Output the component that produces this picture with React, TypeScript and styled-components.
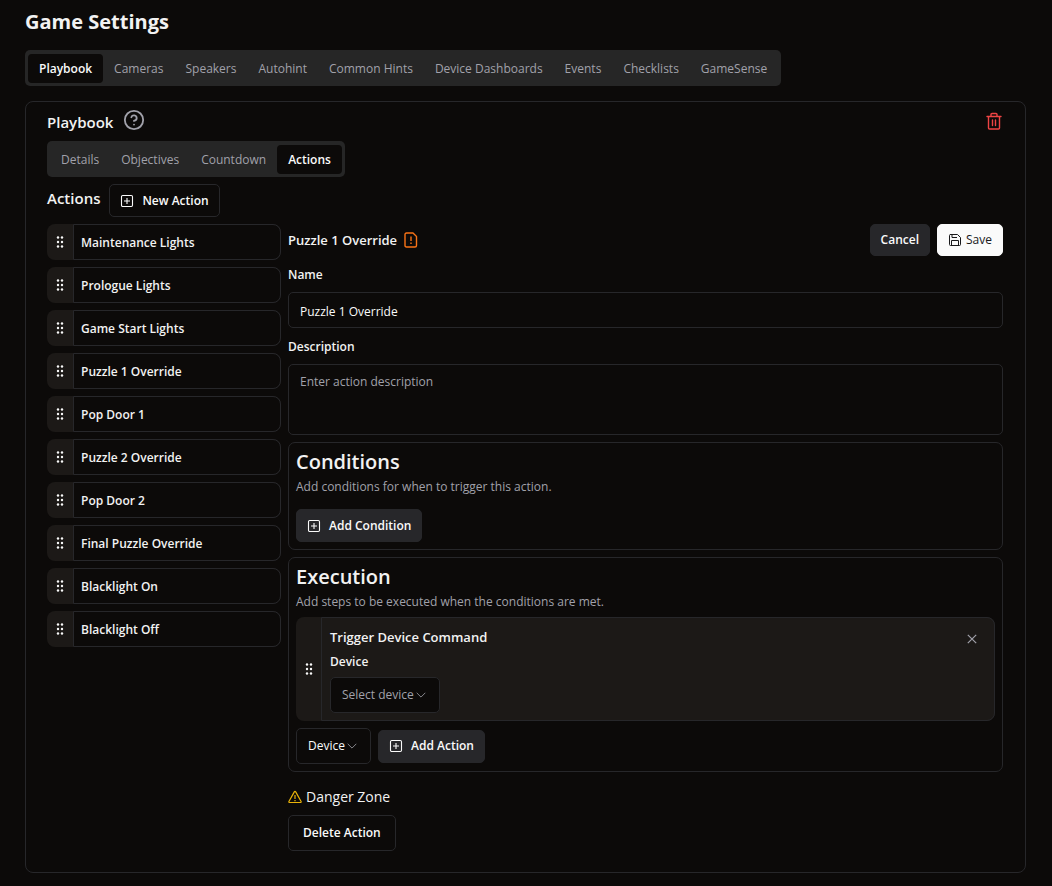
import React from "react";
import styled, { createGlobalStyle, css } from "styled-components";

const Global = createGlobalStyle`
  *, *::before, *::after { box-sizing: border-box; }
  body {
    margin: 0;
    background: #0c0a09;
    color: #f2f2f2;
    font-family: "Open Sans", "Noto Sans", sans-serif;
    font-size: 12px;
    line-height: 18px;
  }
  button, input, textarea, select { font: inherit; color: inherit; margin: 0; }
  h1, h2, h3, h4, p, ul { margin: 0; padding: 0; font-weight: 600; }
`;

const line = "#27272a";
const muted = "#a1a1aa";

const Page = styled.main`
  padding: 7px 26px 13px 25px;
`;

const Title = styled.h1`
  font-size: 20px;
  line-height: 30px;
  font-weight: 700;
`;

const TabList = styled.div<{ $top: number }>`
  display: flex;
  width: fit-content;
  height: 36px;
  margin-top: ${(p) => p.$top}px;
  padding: 4px 3px 3px;
  border-radius: 5px;
  background: #262626;
`;

const Tab = styled.button<{ $active?: boolean }>`
  border: 0;
  border-radius: 4px;
  padding: 0 11px;
  font-weight: ${(p) => (p.$active ? 600 : 500)};
  white-space: nowrap;
  background: ${(p) => (p.$active ? "#0c0a09" : "transparent")};
  color: ${(p) => (p.$active ? "#fafafa" : muted)};
`;

const Panel = styled.section`
  margin-top: 15px;
  padding: 6px 22px 21px 21px;
  border: 1px solid ${line};
  border-radius: 8px;
`;

const PanelHead = styled.header`
  display: flex;
  align-items: flex-start;
  gap: 10px;
  height: 26px;
`;

const Heading = styled.h2`
  font-size: 15px;
  line-height: 28px;
  font-weight: 600;
`;

const IconButton = styled.button`
  display: grid;
  place-items: center;
  min-height: 24px;
  padding: 0;
  border: 0;
  background: transparent;
  color: ${muted};
`;

const DeleteIcon = styled(IconButton)`
  margin-left: auto;
  min-height: 26px;
  color: #ef4444;
`;

const ActionsHead = styled.div`
  display: flex;
  gap: 9px;
  margin-top: 7px;
`;

const Button = styled.button<{ $kind?: "outline" | "solid" | "light"; $size?: "compact" | "tall" }>`
  display: inline-flex;
  align-items: center;
  gap: 8px;
  height: ${(p) => (p.$size === "tall" ? 36 : p.$size === "compact" ? 32 : 33)}px;
  padding: 0 ${(p) => (p.$size === "tall" ? 14 : 10)}px;
  border: 1px solid ${line};
  border-radius: 5px;
  background: #0c0a09;
  color: #fafafa;
  font-weight: 600;
  white-space: nowrap;
  ${(p) => p.$kind === "solid" && css`background: #27272a;`}
  ${(p) =>
    p.$kind === "light" &&
    css`
      background: #fafafa;
      border-color: #fafafa;
      color: #18181b;
      font-weight: 500;
      gap: 4px;
    `}
`;

const Columns = styled.div`
  display: grid;
  grid-template-columns: 234px minmax(0, 1fr);
  gap: 7px;
  margin-top: 7px;
  align-items: start;
`;

const List = styled.ul`
  display: grid;
  gap: 7px;
  list-style: none;
`;

const Item = styled.li`
  display: flex;
  height: 36px;
  border-radius: 8px;
  background: #1c1917;
`;

const Grip = styled.button`
  display: grid;
  place-items: center;
  flex: 0 0 26px;
  padding: 0;
  border: 0;
  background: transparent;
  color: #fafafa;
`;

const ItemName = styled.button`
  flex: 1;
  padding: 2px 7px 0;
  border: 1px solid ${line};
  border-radius: 0 8px 8px 0;
  background: #0c0a09;
  font-weight: 600;
  text-align: left;
`;

const Editor = styled.form`
  display: flex;
  flex-direction: column;
`;

const EditorHead = styled.div`
  display: flex;
  align-items: center;
  gap: 7px;
  height: 32px;
`;

const EditorTitle = styled.h3`
  display: flex;
  align-items: center;
  gap: 7px;
  margin-right: auto;
  font-size: 13px;
`;

const Label = styled.label`
  font-weight: 600;
  line-height: 18px;
`;

const fieldBox = css`
  display: block;
  width: 100%;
  border: 1px solid ${line};
  border-radius: 5px;
  background: #0c0a09;
  color: #fafafa;
  outline: 0;
  &::placeholder { color: ${muted}; opacity: 1; }
`;

const Field = styled.div`
  display: grid;
  gap: 8px;
  margin-top: 10px;
`;

const Input = styled.input`
  ${fieldBox}
  height: 36px;
  padding: 2px 11px 0;
`;

const Textarea = styled.textarea`
  ${fieldBox}
  height: 71px;
  padding: 8px 11px;
  resize: none;
`;

const Card = styled.section`
  margin-top: 7px;
  padding: 7px;
  border: 1px solid ${line};
  border-radius: 7px;
`;

const CardTitle = styled.h3`
  font-size: 20px;
  line-height: 24px;
  font-weight: 600;
`;

const CardText = styled.p<{ $gap: number }>`
  margin: 4px 0 ${(p) => p.$gap}px;
  color: ${muted};
  font-weight: 400;
`;

const Step = styled.div`
  display: flex;
  border-radius: 8px;
  background: #1c1917;
`;

const StepGrip = styled(Grip)`
  flex-basis: 25px;
`;

const StepBody = styled.div`
  flex: 1;
  display: flex;
  justify-content: space-between;
  align-items: flex-start;
  padding: 9px 15px 7px 8px;
  border: 1px solid ${line};
  border-radius: 0 8px 8px 0;
`;

const StepFields = styled.div`
  display: grid;
  gap: 6px;
  justify-items: start;
`;

const StepTitle = styled.h4`
  font-size: 13px;
  line-height: 20px;
`;

const SelectWrap = styled.span<{ $muted?: boolean }>`
  display: inline-grid;
  align-items: center;
  color: ${(p) => (p.$muted ? muted : "#fafafa")};
  & > * { grid-area: 1 / 1; }
  & > svg { justify-self: end; margin-right: 14px; pointer-events: none; color: #85858a; }
`;

const Select = styled.select<{ $width: number }>`
  appearance: none;
  width: ${(p) => p.$width}px;
  height: 36px;
  padding: 0 11px;
  border: 1px solid ${line};
  border-radius: 5px;
  background: #0c0a09;
`;

const AddRow = styled.div`
  display: flex;
  align-items: center;
  gap: 7px;
  margin-top: 7px;
`;

const Danger = styled.h3`
  display: flex;
  align-items: center;
  gap: 4px;
  margin: 16px 0 9px;
  font-size: 14px;
  font-weight: 400;
  & > svg { color: #eab308; }
`;

const Footer = styled.div`
  display: flex;
`;

const PlusSquare = () => (
  <svg width="14" height="14" viewBox="0 0 14 14" fill="none" stroke="currentColor" aria-hidden="true">
    <rect x="1.5" y="1.5" width="11" height="11" rx="1.2" strokeWidth="1.1" />
    <path d="M7 4v6M4 7h6" strokeWidth="1.1" />
  </svg>
);

const Dots = () => (
  <svg width="14" height="14" viewBox="0 0 14 14" fill="currentColor" aria-hidden="true">
    {[2.5, 7, 11.5].map((y) =>
      [5, 9].map((x) => <circle key={`${x}-${y}`} cx={x} cy={y} r="1.2" />)
    )}
  </svg>
);

const Chevron = () => (
  <svg width="10" height="10" viewBox="0 0 10 10" fill="none" stroke="currentColor" aria-hidden="true">
    <path d="M0.7 2.8l4.3 4.3 4.3-4.3" />
  </svg>
);

const Help = () => (
  <svg width="22" height="22" viewBox="0 0 24 24" fill="none" stroke="currentColor" strokeWidth="2" strokeLinecap="round" strokeLinejoin="round" aria-hidden="true">
    <circle cx="12" cy="12" r="10" />
    <path d="M9.09 9a3 3 0 0 1 5.83 1c0 2-3 3-3 3M12 17h.01" />
  </svg>
);

const Trash = () => (
  <svg width="18" height="18" viewBox="0 0 18 18" fill="none" stroke="currentColor" strokeWidth="1.4" strokeLinecap="round" strokeLinejoin="round" aria-hidden="true">
    <path d="M2 4.5h14M3.5 4.5v11.5q0 1 1 1h9q1 0 1-1v-11.5M6 4.5v-2q0-1 1-1h4q1 0 1 1v2M7.5 8v5.5M10.5 8v5.5" />
  </svg>
);

const FileWarning = () => (
  <svg width="14" height="16" viewBox="0 0 14 16" fill="none" stroke="#f97316" strokeWidth="1.4" strokeLinejoin="round" role="img" aria-label="Incomplete">
    <path d="M2.5 1h6.5l3.5 3.5v9q0 1.5-1.5 1.5h-8.5q-1.5 0-1.5-1.5v-11q0-1.5 1.5-1.5z" />
    <path d="M7 4.5v4.5M7 10.5v1.5" />
  </svg>
);

const Floppy = () => (
  <svg width="14" height="14" viewBox="0 0 14 14" fill="none" stroke="currentColor" strokeLinejoin="round" aria-hidden="true">
    <path d="M2 1.5h7.5l3 3v7q0 1-1 1h-9q-1 0-1-1v-9q0-1 1-1z" />
    <path d="M4 1.5v3h5M3.5 12.5v-5h7v5" />
  </svg>
);

const Warning = () => (
  <svg width="14" height="14" viewBox="0 0 14 14" fill="none" stroke="currentColor" strokeWidth="1.2" strokeLinejoin="round" aria-hidden="true">
    <path d="M6.3 1.9q.7-1.1 1.4 0l5.4 9.6q.3 1-.7 1h-10.8q-1 0-.7-1z" />
    <path d="M7 5v4M7 10v1.2" />
  </svg>
);

const Cross = () => (
  <svg width="14" height="14" viewBox="0 0 14 14" fill="none" stroke="currentColor" strokeWidth="1.2" aria-hidden="true">
    <path d="M2.8 2.8l8.4 8.4M11.2 2.8l-8.4 8.4" />
  </svg>
);

const sections = ["Playbook", "Cameras", "Speakers", "Autohint", "Common Hints", "Device Dashboards", "Events", "Checklists", "GameSense"];
const views = ["Details", "Objectives", "Countdown", "Actions"];
const actions = [
  "Maintenance Lights",
  "Prologue Lights",
  "Game Start Lights",
  "Puzzle 1 Override",
  "Pop Door 1",
  "Puzzle 2 Override",
  "Pop Door 2",
  "Final Puzzle Override",
  "Blacklight On",
  "Blacklight Off",
];

export default function App() {
  return (
    <Page>
      <Global />
      <Title>Game Settings</Title>
      <TabList role="tablist" $top={13}>
        {sections.map((s) => (
          <Tab key={s} role="tab" aria-selected={s === "Playbook"} $active={s === "Playbook"}>{s}</Tab>
        ))}
      </TabList>
      <Panel>
        <PanelHead>
          <Heading>Playbook</Heading>
          <IconButton aria-label="Help"><Help /></IconButton>
          <DeleteIcon aria-label="Delete playbook"><Trash /></DeleteIcon>
        </PanelHead>
        <TabList role="tablist" $top={7}>
          {views.map((s) => (
            <Tab key={s} role="tab" aria-selected={s === "Actions"} $active={s === "Actions"}>{s}</Tab>
          ))}
        </TabList>
        <ActionsHead>
          <Heading>Actions</Heading>
          <Button $kind="outline"><PlusSquare />New Action</Button>
        </ActionsHead>
        <Columns>
          <List>
            {actions.map((a) => (
              <Item key={a}>
                <Grip aria-label={`Move ${a}`}><Dots /></Grip>
                <ItemName>{a}</ItemName>
              </Item>
            ))}
          </List>
          <Editor onSubmit={(e: React.FormEvent) => e.preventDefault()}>
            <EditorHead>
              <EditorTitle>Puzzle 1 Override <FileWarning /></EditorTitle>
              <Button type="button" $kind="solid" $size="compact">Cancel</Button>
              <Button type="submit" $kind="light" $size="compact"><Floppy />Save</Button>
            </EditorHead>
            <Field>
              <Label htmlFor="name">Name</Label>
              <Input id="name" defaultValue="Puzzle 1 Override" />
            </Field>
            <Field>
              <Label htmlFor="description">Description</Label>
              <Textarea id="description" placeholder="Enter action description" />
            </Field>
            <Card>
              <CardTitle>Conditions</CardTitle>
              <CardText $gap={13}>Add conditions for when to trigger this action.</CardText>
              <Button type="button" $kind="solid"><PlusSquare />Add Condition</Button>
            </Card>
            <Card>
              <CardTitle>Execution</CardTitle>
              <CardText $gap={6}>Add steps to be executed when the conditions are met.</CardText>
              <Step>
                <StepGrip type="button" aria-label="Move step"><Dots /></StepGrip>
                <StepBody>
                  <StepFields>
                    <StepTitle>Trigger Device Command</StepTitle>
                    <Label htmlFor="device">Device</Label>
                    <SelectWrap $muted>
                      <Select id="device" $width={110}><option>Select device</option></Select>
                      <Chevron />
                    </SelectWrap>
                  </StepFields>
                  <IconButton type="button" aria-label="Remove step"><Cross /></IconButton>
                </StepBody>
              </Step>
              <AddRow>
                <SelectWrap>
                  <Select aria-label="Step type" $width={75}><option>Device</option></Select>
                  <Chevron />
                </SelectWrap>
                <Button type="button" $kind="solid"><PlusSquare />Add Action</Button>
              </AddRow>
            </Card>
            <Danger><Warning />Danger Zone</Danger>
            <Footer><Button type="button" $kind="outline" $size="tall">Delete Action</Button></Footer>
          </Editor>
        </Columns>
      </Panel>
    </Page>
  );
}
